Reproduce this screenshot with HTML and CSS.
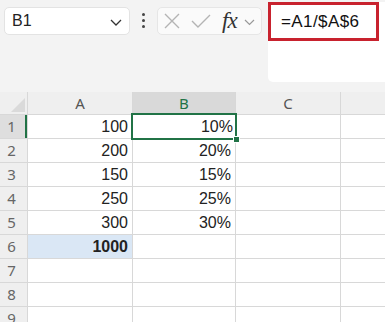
FILE: index.html
```html
<!DOCTYPE html>
<html lang="en">
<head>
    <meta charset="UTF-8">
    <title>Sheet</title>
    <link rel="stylesheet" href="styles.css">
</head>
<body>
    <div class="toolbar">
        <div class="namebox">
            <span>B1</span>
            <svg class="chev" width="12" height="7" viewBox="0 0 12 7"><path d="M1 1 L6 6 L11 1" fill="none" stroke="#333" stroke-width="1.3"/></svg>
        </div>
        <div class="dots"><i></i><i></i><i></i></div>
        <div class="fxbox">
            <svg class="cancel" width="18" height="18" viewBox="0 0 18 18"><path d="M2 2 L16 16 M16 2 L2 16" stroke="#b4b4b4" stroke-width="1.4" fill="none"/></svg>
            <svg class="enter" width="20" height="16" viewBox="0 0 20 16"><path d="M1 8 L7 14 L19 2" stroke="#b4b4b4" stroke-width="1.4" fill="none"/></svg>
            <span class="fx">fx</span>
            <svg class="more" width="11" height="7" viewBox="0 0 11 7"><path d="M1 1 L5.5 5.5 L10 1" fill="none" stroke="#999" stroke-width="1.2"/></svg>
        </div>
        <div class="formula">
            <div class="formula-line">=A1/$A$6</div>
        </div>
    </div>

    <div class="sheet">
        <div class="corner"><svg width="14" height="14" viewBox="0 0 14 14"><path d="M14 0 L14 14 L0 14 Z" fill="#dadada"/></svg></div>
        <div class="colhead">A</div>
        <div class="colhead active">B</div>
        <div class="colhead">C</div>
        <div class="colhead"></div>

        <div class="rowhead active">1</div>
        <div class="cell">100</div>
        <div class="cell selected">10%</div>
        <div class="cell"></div>
        <div class="cell"></div>

        <div class="rowhead">2</div>
        <div class="cell">200</div>
        <div class="cell">20%</div>
        <div class="cell"></div>
        <div class="cell"></div>

        <div class="rowhead">3</div>
        <div class="cell">150</div>
        <div class="cell">15%</div>
        <div class="cell"></div>
        <div class="cell"></div>

        <div class="rowhead">4</div>
        <div class="cell">250</div>
        <div class="cell">25%</div>
        <div class="cell"></div>
        <div class="cell"></div>

        <div class="rowhead">5</div>
        <div class="cell">300</div>
        <div class="cell">30%</div>
        <div class="cell"></div>
        <div class="cell"></div>

        <div class="rowhead">6</div>
        <div class="cell total">1000</div>
        <div class="cell"></div>
        <div class="cell"></div>
        <div class="cell"></div>

        <div class="rowhead">7</div>
        <div class="cell"></div>
        <div class="cell"></div>
        <div class="cell"></div>
        <div class="cell"></div>

        <div class="rowhead">8</div>
        <div class="cell"></div>
        <div class="cell"></div>
        <div class="cell"></div>
        <div class="cell"></div>

        <div class="rowhead">9</div>
        <div class="cell"></div>
        <div class="cell"></div>
        <div class="cell"></div>
        <div class="cell"></div>
    </div>
</body>
</html>
```

FILE: styles.css
```css
body {
    margin: 0;
    background-color: #f3f3f3;
    font-family: "Liberation Sans", Arial, sans-serif;
    overflow: hidden;
}
.toolbar {
    display: flex;
    align-items: flex-start;
    height: 92px;
}
.namebox {
    margin: 7px 0 0 4px;
    width: 126px;
    height: 28px;
    box-sizing: border-box;
    background-color: #fff;
    border: 1px solid #e3e3e3;
    border-radius: 5px;
    display: flex;
    align-items: center;
    justify-content: space-between;
    padding: 0 7px 0 7px;
    font-size: 16px;
    color: #222;
}
.namebox .chev {
    margin-top: 2px;
}
.dots {
    width: 27px;
    margin-top: 13px;
    display: flex;
    flex-direction: column;
    align-items: center;
    gap: 3px;
}
.dots i {
    width: 3px;
    height: 3px;
    border-radius: 50%;
    background-color: #444;
}
.fxbox {
    margin-top: 7px;
    width: 105px;
    height: 28px;
    box-sizing: border-box;
    background-color: #fafafa;
    border: 1px solid #e6e6e6;
    border-radius: 5px;
    display: flex;
    align-items: center;
    padding-left: 5px;
}
.fxbox .enter {
    margin-left: 10px;
}
.fx {
    font-family: "Liberation Serif", "Times New Roman", serif;
    font-style: italic;
    font-size: 23px;
    line-height: 24px;
    color: #333;
    margin-left: 11px;
    letter-spacing: -1px;
}
.fxbox .more {
    margin-left: 7px;
    margin-top: 2px;
}
.formula {
    margin: 2px 0 0 6px;
    width: 117px;
    height: 80px;
    background-color: #fff;
    border-radius: 0 0 0 5px;
}
.formula-line {
    width: 111px;
    height: 39px;
    box-sizing: border-box;
    border: 3px solid #c8222e;
    padding: 7px 0 0 10px;
    font-size: 17px;
    letter-spacing: 0.4px;
    color: #111;
}
.sheet {
    display: grid;
    grid-template-columns: 27px 104px 102px 104px 1fr;
    grid-template-rows: 22px repeat(9, 23px);
    gap: 1px;
    background-color: #d8d8d8;
}
.corner {
    background-color: #efefef;
    display: flex;
    align-items: flex-end;
    justify-content: flex-end;
    padding: 0 2px 2px 0;
}
.colhead {
    background-color: #efefef;
    color: #555;
    font-family: "Noto Sans", sans-serif;
    font-size: 15px;
    text-align: center;
    line-height: 22px;
}
.colhead.active {
    background-color: #d9d9d9;
    color: #217346;
}
.rowhead {
    background-color: #efefef;
    color: #666;
    font-family: "Noto Sans", sans-serif;
    font-size: 15px;
    line-height: 23px;
    padding-right: 4px;
    text-align: center;
}
.rowhead.active {
    background-color: #dedede;
    box-shadow: inset -2px 0 0 #217346;
}
.cell {
    background-color: #fff;
    font-size: 16px;
    color: #222;
    text-align: right;
    line-height: 24px;
    padding-right: 4px;
}
.cell.selected {
    position: relative;
    outline: 2px solid #217346;
    padding-right: 2px;
}
.cell.selected::after {
    content: "";
    position: absolute;
    right: -5px;
    bottom: -5px;
    width: 5px;
    height: 5px;
    background-color: #217346;
    border: 1px solid #fff;
}
.cell.total {
    background-color: #dae7f5;
    font-weight: bold;
}
```
